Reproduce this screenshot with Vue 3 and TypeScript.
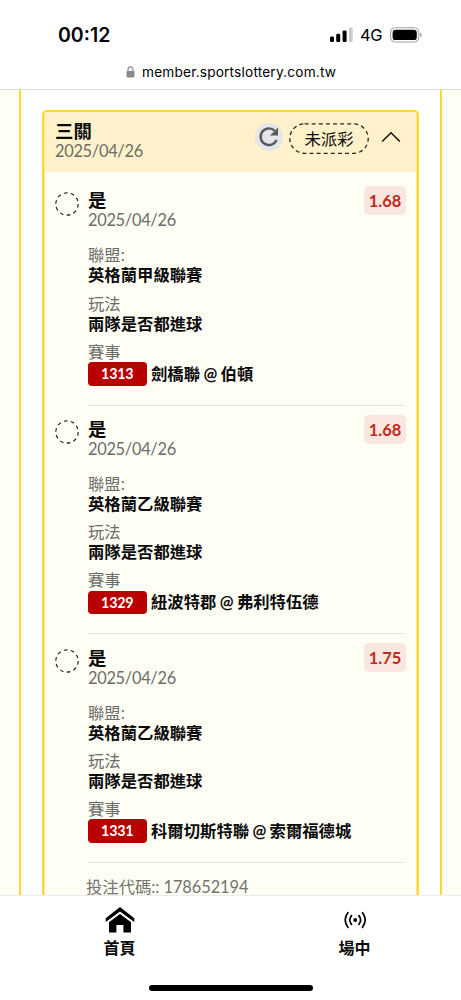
<script setup lang="ts">
interface Leg {
  pick: string
  date: string
  odds: string
  league: string
  market: string
  code: string
  match: string
}

const legs: Leg[] = [
  { pick: '是', date: '2025/04/26', odds: '1.68', league: '英格蘭甲級聯賽', market: '兩隊是否都進球', code: '1313', match: '劍橋聯 @ 伯頓' },
  { pick: '是', date: '2025/04/26', odds: '1.68', league: '英格蘭乙級聯賽', market: '兩隊是否都進球', code: '1329', match: '紐波特郡 @ 弗利特伍德' },
  { pick: '是', date: '2025/04/26', odds: '1.75', league: '英格蘭乙級聯賽', market: '兩隊是否都進球', code: '1331', match: '科爾切斯特聯 @ 索爾福德城' },
]
</script>

<template>
  <div class="phone">
    <header class="top">
      <div class="status">
        <span class="clock">00:12</span>
        <div class="signals">
          <svg class="bars" width="23" height="16" viewBox="0 0 23 16">
            <rect x="0" y="9.6" width="4" height="5.4" rx="1.2" />
            <rect x="6.2" y="6.8" width="4" height="8.2" rx="1.2" />
            <rect x="12.6" y="3.6" width="4" height="11.4" rx="1.2" />
            <rect x="19" y="0.6" width="3.7" height="14.4" rx="1.2" fill="#cbcbcb" />
          </svg>
          <span class="net">4G</span>
          <svg class="battery" width="33" height="16" viewBox="0 0 33 16">
            <rect x="0.6" y="0.8" width="28.2" height="14.2" rx="4.8" fill="none" stroke="#a2a2a2" stroke-width="1.1" />
            <rect x="2.6" y="2.7" width="24.2" height="10.4" rx="3.2" />
            <path d="M30.2 5.8C32.4 6.4 32.4 9.4 30.2 10Z" fill="#a2a2a2" />
          </svg>
        </div>
      </div>
      <div class="address">
        <svg width="9" height="12" viewBox="0 0 9 12">
          <path d="M2 6V3.3C2 0 7 0 7 3.3V6" fill="none" stroke="#8a8a8e" stroke-width="1.2" />
          <rect x="0.5" y="5" width="8" height="6.5" rx="1.1" fill="#8a8a8e" />
        </svg>
        <span>member.sportslottery.com.tw</span>
      </div>
    </header>

    <main class="page">
      <section class="panel">
        <article class="ticket">
          <div class="ticket-head">
            <div class="heading">
              <div class="title">三關</div>
              <div class="date">2025/04/26</div>
            </div>
            <div class="refresh">
              <svg width="28" height="28" viewBox="0 0 28 28">
                <path d="M19.6 7.6A8.3 8.3 0 1 0 21.6 17" fill="none" stroke="#58595b" stroke-width="2.4" />
                <path d="M23 4.6V12.6H15Z" fill="#58595b" />
              </svg>
            </div>
            <div class="state">
              <svg width="80" height="32" viewBox="0 0 80 32">
                <rect x="0.8" y="0.8" width="78.4" height="29.6" rx="14.8" fill="none" stroke="#242424" stroke-width="1.3" stroke-dasharray="4 3.1" />
              </svg>
              <span>未派彩</span>
            </div>
            <svg class="chevron" width="20" height="12" viewBox="0 0 20 12">
              <path d="M1.2 10.5L10 1.8L18.8 10.5" fill="none" stroke="#111" stroke-width="1.6" />
            </svg>
          </div>

          <div class="legs">
            <div v-for="leg in legs" :key="leg.code" class="leg">
              <svg class="ring" width="24" height="24" viewBox="0 0 24 24">
                <circle cx="12" cy="12" r="11.2" fill="none" stroke="#222" stroke-width="1.2" stroke-dasharray="3.7 3.34" />
              </svg>
              <div class="info">
                <div class="leg-top">
                  <div>
                    <div class="title">{{ leg.pick }}</div>
                    <div class="date">{{ leg.date }}</div>
                  </div>
                  <span class="odds">{{ leg.odds }}</span>
                </div>
                <dl>
                  <dt>聯盟:</dt>
                  <dd>{{ leg.league }}</dd>
                  <dt>玩法</dt>
                  <dd>{{ leg.market }}</dd>
                  <dt>賽事</dt>
                  <dd class="match"><span class="code">{{ leg.code }}</span><span>{{ leg.match }}</span></dd>
                </dl>
              </div>
            </div>
          </div>
          <div class="bet-code">投注代碼:: 178652194</div>
        </article>
      </section>
    </main>

    <nav class="tabs">
      <div class="tab-row">
        <div class="tab">
          <svg width="30" height="26" viewBox="0 0 30 26">
            <path d="M15 0L29.3 11.2V15L15 4.4L0.7 15V11.2Z" />
            <path d="M15 7L26 15.2V25.4H18.4V18H11.4V25.4H4V15.2Z" />
          </svg>
          <span>首頁</span>
        </div>
        <div class="tab">
          <svg width="30" height="26" viewBox="0 0 30 26" fill="none" stroke="#000" stroke-width="1.7" stroke-linecap="round">
            <circle cx="15.2" cy="13" r="1.9" fill="#000" stroke="none" />
            <path d="M11.5 8.6Q8 13 11.5 17.4M18.9 8.6Q22.4 13 18.9 17.4M8 5.6Q2.4 13 8 20.4M22.4 5.6Q28 13 22.4 20.4" />
          </svg>
          <span>場中</span>
        </div>
      </div>
      <div class="home-bar"></div>
    </nav>
  </div>
</template>

<style>
body {
  margin: 0;
  background: #fff;
}
</style>

<style scoped>
.phone {
  width: 461px;
  height: 1000px;
  display: flex;
  flex-direction: column;
  overflow: hidden;
  background: #fff;
  color: #0b0b0b;
  font-family: Lato, "Noto Sans CJK TC", sans-serif;
}
svg {
  display: block;
  flex: none;
}
.top {
  box-sizing: border-box;
  height: 90px;
  flex: none;
  border-bottom: 1px solid #dcdcdc;
  font-family: Inter, sans-serif;
  color: #000;
}
.status {
  box-sizing: border-box;
  height: 60px;
  padding: 9px 38px 0 58px;
  display: flex;
  align-items: center;
  justify-content: space-between;
}
.clock {
  font-size: 19.5px;
  font-weight: 600;
  line-height: 24px;
}
.signals {
  display: flex;
  align-items: center;
}
.net {
  width: 22px;
  margin: 0 8px 0 7px;
  font-size: 16.5px;
  line-height: 20px;
  font-weight: 400;
  letter-spacing: -0.3px;
  white-space: nowrap;
}
.address {
  display: flex;
  align-items: center;
  gap: 7px;
  height: 24px;
  padding-left: 126px;
  font-size: 13.7px;
  letter-spacing: 0.17px;
}
.page {
  flex: 1;
  min-height: 0;
  overflow: hidden;
  padding: 0 19px;
  background: #fffef5;
}
.panel {
  box-sizing: border-box;
  height: 830px;
  padding: 20px 21px 0;
  border: solid #ffd92f;
  border-width: 0 2px;
  background: #fff;
}
.ticket {
  box-sizing: border-box;
  height: 830px;
  border: 2px solid #ffd92f;
  box-shadow: inset 0 0 0 1px #ffe984;
  border-radius: 5px 5px 0 0;
  background: #fffef5;
}
.ticket-head {
  box-sizing: border-box;
  height: 60px;
  margin: 0 1px;
  padding: 0 15px 0 10px;
  display: flex;
  align-items: center;
  background: #fff2cb;
}
.heading {
  flex: 1;
  margin-top: -3px;
}
.title {
  height: 20px;
  line-height: 20px;
  font-size: 18.4px;
  font-weight: 700;
}
.date {
  height: 19px;
  line-height: 19px;
  font-size: 16.4px;
  letter-spacing: -0.3px;
  color: #6d6d6a;
}
.refresh {
  width: 28px;
  height: 28px;
  margin: -10px 7px 0 -1px;
  border-radius: 50%;
  background: #e5e6e9;
}
.state {
  display: grid;
  place-items: center;
  margin-top: -7px;
  margin-left: -1px;
  font-size: 16.4px;
  line-height: 24px;
}
.state > * {
  grid-area: 1 / 1;
}
.chevron {
  margin: -11px 0 0 12px;
}
.legs {
  padding: 5px 13px 0 11px;
}
.leg {
  height: 228.7px;
  display: flex;
}
.ring {
  margin: 14.5px 9px 0 0;
}
.info {
  box-sizing: border-box;
  flex: 1;
  padding-top: 13.4px;
  border-bottom: 1px solid #e6e3dd;
}
.leg-top {
  display: flex;
  justify-content: space-between;
}
.odds {
  width: 42px;
  height: 29px;
  margin: -4.4px -2px 0 0;
  border-radius: 5px;
  background: #f8e6df;
  color: #bd2b20;
  font-size: 16.4px;
  font-weight: 700;
  line-height: 30px;
  text-align: center;
}
dl {
  margin: 16px 0 0;
  font-size: 16.35px;
}
dt {
  height: 20px;
  line-height: 20px;
  color: #6d6d6a;
}
dd {
  height: 20px;
  margin: 0 0 8.2px;
  line-height: 20px;
  font-weight: 700;
}
.match {
  display: flex;
  align-items: center;
  gap: 4.5px;
  height: 24px;
  margin: 0;
  word-spacing: -0.6px;
  white-space: nowrap;
}
.code {
  width: 58.5px;
  height: 23.5px;
  border-radius: 4px;
  background: #b80000;
  color: #fff;
  font-size: 14.3px;
  letter-spacing: -0.2px;
  line-height: 23px;
  text-align: center;
}
.bet-code {
  margin: 13px 0 0 42px;
  height: 22px;
  line-height: 22px;
  font-size: 16.4px;
  letter-spacing: -0.07px;
  color: #747470;
}
.tabs {
  box-sizing: border-box;
  height: 105px;
  flex: none;
  border-top: 1px solid #ececec;
  background: #fff;
}
.tab-row {
  display: flex;
  height: 88.5px;
  padding: 0 0 0 2px;
}
.tab {
  width: 235px;
  padding-top: 11px;
  display: flex;
  flex: none;
  flex-direction: column;
  align-items: center;
  gap: 3px;
  font-size: 16px;
  font-weight: 700;
  line-height: 24px;
}
.home-bar {
  width: 164px;
  height: 6px;
  margin: 0 auto;
  border-radius: 3px;
  background: #000;
}
</style>
